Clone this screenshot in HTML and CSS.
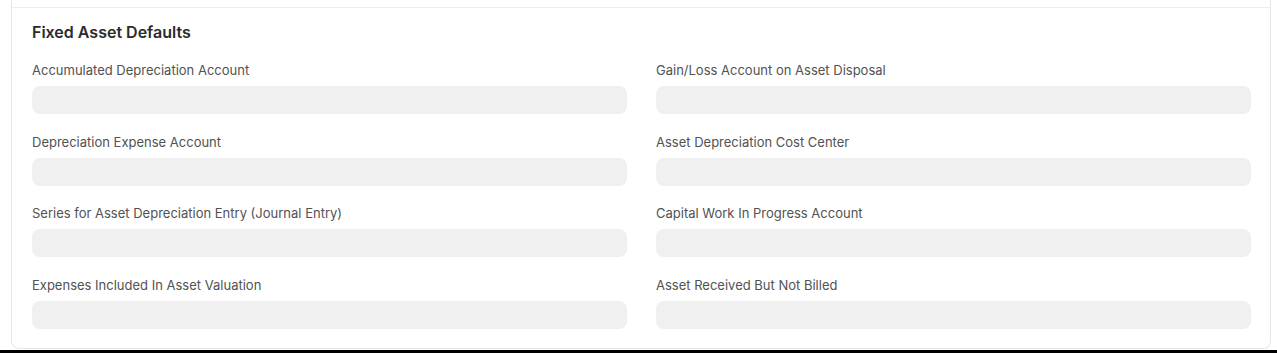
FILE: index.html
```html
<!DOCTYPE html>
<html lang="en">
<head>
<meta charset="utf-8">
<title>Fixed Asset Defaults</title>
<link rel="stylesheet" href="styles.css">
</head>
<body>
<div class="page">
  <div class="card">
    <div class="section">
      <h3 class="section-title">Fixed Asset Defaults</h3>
      <div class="grid">
        <div class="field"><label class="label">Accumulated Depreciation Account</label><div class="control"></div></div>
        <div class="field"><label class="label">Gain/Loss Account on Asset Disposal</label><div class="control"></div></div>
        <div class="field"><label class="label">Depreciation Expense Account</label><div class="control"></div></div>
        <div class="field"><label class="label">Asset Depreciation Cost Center</label><div class="control"></div></div>
        <div class="field"><label class="label">Series for Asset Depreciation Entry (Journal Entry)</label><div class="control"></div></div>
        <div class="field"><label class="label">Capital Work In Progress Account</label><div class="control"></div></div>
        <div class="field"><label class="label">Expenses Included In Asset Valuation</label><div class="control"></div></div>
        <div class="field"><label class="label">Asset Received But Not Billed</label><div class="control"></div></div>
      </div>
    </div>
  </div>
</div>
<div class="bottom-bar"></div>
</body>
</html>
```
FILE: styles.css
```css
* { box-sizing: border-box; }
html, body { margin: 0; padding: 0; background: #fff; }
body {
  font-family: Inter, "Noto Sans", "Liberation Sans", sans-serif;
  color: #171717;
  -webkit-font-smoothing: antialiased;
}
.page {
  height: 350px;
  padding: 0 6px 0 11px;
  background: #fff;
}
.card {
  height: 349px;
  border: 1px solid #e6e6e6;
  border-top: none;
  border-radius: 0 0 8px 8px;
  padding-top: 7px;
}
.section {
  border-top: 1px solid #ededed;
  padding: 14px 19px 0 20px;
}
.section-title {
  margin: 0;
  font-size: 16px;
  line-height: 20px;
  font-weight: 600;
  color: #2b2b2b;
}
.grid {
  margin-top: 19px;
  display: grid;
  grid-template-columns: 1fr 1fr;
  column-gap: 29px;
  row-gap: 18.67px;
}
.field {
  display: flex;
  flex-direction: column;
  gap: 7px;
}
.label {
  font-size: 13px;
  line-height: 18px;
  color: #525252;
}
.control {
  height: 28px;
  background: #f0f0f0;
  border-radius: 8px;
}
.bottom-bar {
  height: 3px;
  background: #000;
}
```
